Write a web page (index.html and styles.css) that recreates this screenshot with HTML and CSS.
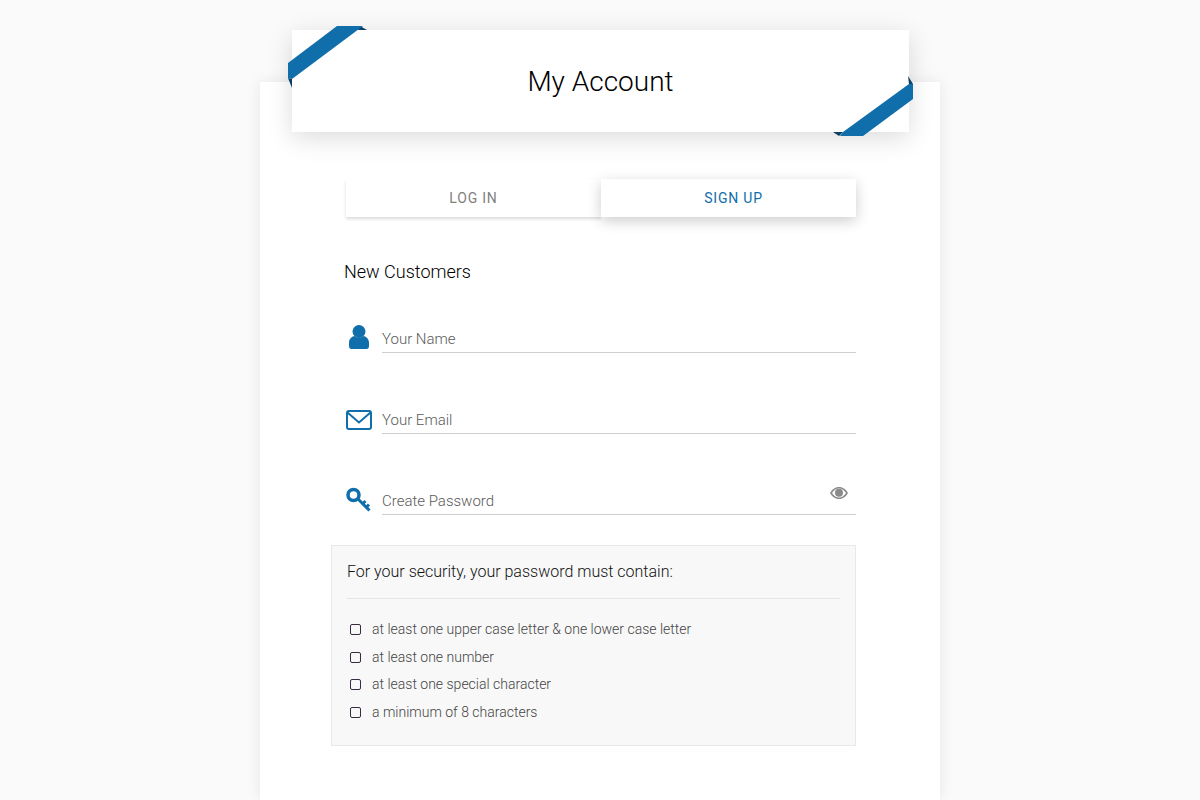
FILE: index.html
```html
<!DOCTYPE html>
<html>
<head lang="en">
    <meta charset="UTF-8">
    <title>My Account</title>
    <link rel="stylesheet" href="styles.css">
</head>
<body>
<div id="card">
    <div id="header">
        <svg class="ribbon" width="633" height="118" viewBox="0 0 633 118">
            <polygon fill="#0b3f66" points="0,52 4,62 4,53"/>
            <polygon fill="#0b3f66" points="72,0 79,4 70,4"/>
            <polygon fill="#106eaa" points="49,0 75,0 4,53 0,52 0,37"/>
            <polygon fill="#0b3f66" points="620,50 625,58 621,58"/>
            <polygon fill="#0b3f66" points="545,106 551,110 555,106"/>
            <polygon fill="#106eaa" points="625,58 625,73 575,110 552,110 555,106 621,58"/>
        </svg>
        <h1>My Account</h1>
    </div>
    <div id="content">
        <ul id="tab">
            <li>LOG IN</li>
            <li class="selected">SIGN UP</li>
        </ul>
        <h2>New Customers</h2>
        <div class="field">
            <svg class="icon" width="28" height="28" viewBox="0 0 28 28">
                <circle fill="#106eaa" cx="14" cy="9.500" r="6.500"/>
                <path fill="#106eaa" d="M4 21c0-4 2.500-6.500 5.500-7 2.500 2 6.500 2 9 0 3 .5 5.500 3 5.500 7v3c0 1.800-1 3-2.500 3h-15C5 27 4 25.800 4 24z"/>
            </svg>
            <label>Your Name</label>
        </div>
        <div class="field">
            <svg class="icon" width="28" height="28" viewBox="0 0 28 28">
                <rect fill="none" stroke="#106eaa" stroke-width="2" x="2" y="8" width="24" height="18" rx="2"/>
                <path fill="none" stroke="#106eaa" stroke-width="2" d="M2.500 9.500L14 19.500 25.500 9.500"/>
            </svg>
            <label>Your Email</label>
        </div>
        <div class="field">
            <svg class="icon" width="28" height="28" viewBox="0 0 28 28">
                <circle fill="none" stroke="#106eaa" stroke-width="3.500" cx="8.500" cy="11" r="5.500"/>
                <path fill="none" stroke="#106eaa" stroke-width="3" d="M13 15l11.500 11.500"/>
                <path fill="none" stroke="#106eaa" stroke-width="3" d="M17.500 20l3-3M21 23.500l3-3"/>
            </svg>
            <label>Create Password</label>
            <svg class="eye" width="18" height="12" viewBox="0 0 18 12">
                <path fill="#8a8a8a" d="M0 6c2-3.500 5-6 9-6s7 2.500 9 6c-2 3.500-5 6-9 6S2 9.500 0 6zm2 0c1.600 2.500 4 4.500 7 4.500S14.400 8.500 16 6c-1.600-2.500-4-4.500-7-4.500S3.600 3.500 2 6z"/>
                <circle fill="#8a8a8a" cx="9" cy="5.800" r="4"/>
            </svg>
        </div>
        <div id="rules">
            <p>For your security, your password must contain:</p>
            <ul>
                <li><span class="check"></span>at least one upper case letter &amp; one lower case letter</li>
                <li><span class="check"></span>at least one number</li>
                <li><span class="check"></span>at least one special character</li>
                <li><span class="check"></span>a minimum of 8 characters</li>
            </ul>
        </div>
    </div>
</div>
</body>
</html>
```
FILE: styles.css
```css
* {
    margin: 0;
    padding: 0;
    box-sizing: border-box;
}

ol, ul {
    list-style: none;
}

html, body {
    height: 100%;
    overflow: hidden;
}

body {
    background: #fafafa;
    font-family: Roboto, "Liberation Sans", sans-serif;
    font-weight: 300;
    color: #111;
}

#card {
    width: 680px;
    height: calc(100vh - 82px);
    margin: 82px auto 0;
    background: #fff;
    box-shadow: 0 0 14px rgba(0, 0, 0, .08);
}

#header {
    position: relative;
    top: -52px;
    width: 617px;
    height: 102px;
    margin-left: 32px;
    margin-bottom: -52px;
    background: #fff;
    box-shadow: 0 6px 24px rgba(0, 0, 0, .14);
}

#header h1 {
    font-size: 28px;
    font-weight: 300;
    line-height: 104px;
    text-align: center;
    color: #000;
}

.ribbon {
    position: absolute;
    left: -4px;
    top: -4px;
}

#content {
    padding: 47px 84px 0 85px;
}

#tab {
    display: flex;
    width: 510px;
    margin-left: 1px;
}

#tab li {
    width: 255px;
    height: 38px;
    font-size: 14px;
    font-weight: 400;
    letter-spacing: .8px;
    line-height: 38px;
    text-align: center;
    color: #808080;
    background: #fff;
    box-shadow: 0 2px 3px rgba(0, 0, 0, .15);
}

#tab .selected {
    position: relative;
    padding-left: 10px;
    color: #106eaa;
    box-shadow: 0 4px 14px rgba(0, 0, 0, .2);
}

h2 {
    margin: 43px 0 0 -1px;
    font-size: 18px;
    font-weight: 300;
    line-height: 24px;
    color: #000;
}

.field {
    position: relative;
    height: 40px;
    margin-top: 41px;
    padding-left: 37px;
    display: flex;
    align-items: flex-end;
}

h2 + .field {
    margin-top: 29px;
}

.field label {
    display: block;
    width: 100%;
    padding-bottom: 3px;
    font-size: 15px;
    line-height: 20px;
    color: #5a5a5a;
    border-bottom: 1px solid #cfcfcf;
}

.icon {
    position: absolute;
    left: 0;
    top: 9px;
}

.eye {
    position: absolute;
    right: 8px;
    top: 12px;
}

#rules {
    width: 525px;
    height: 201px;
    margin: 30px 0 0 -14px;
    padding: 14px 15px 0;
    background: #f8f8f8;
    border: 1px solid #e8e8e8;
}

#rules p {
    padding-bottom: 14px;
    font-size: 16px;
    line-height: 24px;
    color: #111;
    border-bottom: 1px solid #e6e6e6;
}

#rules ul {
    margin-top: 17px;
}

#rules li {
    display: flex;
    align-items: center;
    margin-left: 3px;
    font-size: 14px;
    line-height: 27.600px;
    color: #444;
}

.check {
    width: 11px;
    height: 11px;
    margin-right: 11px;
    border: 1px solid #3a2b40;
    border-radius: 2px;
}
```
